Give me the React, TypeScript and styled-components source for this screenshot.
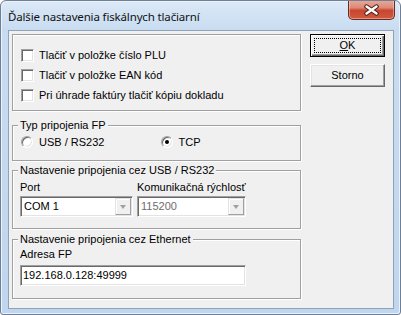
import React from "react";
import styled, { createGlobalStyle } from "styled-components";

const GlobalStyle = createGlobalStyle`
  html, body {
    margin: 0;
    padding: 0;
    background: #ffffff;
  }
  body {
    font-family: "Liberation Sans", Arial, sans-serif;
    font-size: 11px;
    color: #000;
  }
`;

const checkOptions = [
  "Tlačiť v položke číslo PLU",
  "Tlačiť v položke EAN kód",
  "Pri úhrade faktúry tlačiť kópiu dokladu",
];

const App = (): JSX.Element => {
  return (
    <>
      <GlobalStyle />
      <Window>
        <TitleBar>
          <Title>Ďalšie nastavenia fiskálnych tlačiarní</Title>
          <CloseButton>
            <svg width="17" height="12" viewBox="0 0 17 12">
              <path d="M3.5 2.5 L13.5 9.5 M13.5 2.5 L3.5 9.5" stroke="#4a1e16" strokeWidth="4.4" strokeLinecap="round" fill="none" />
              <path d="M3.5 2.5 L13.5 9.5 M13.5 2.5 L3.5 9.5" stroke="#ffffff" strokeWidth="2.4" strokeLinecap="round" fill="none" />
            </svg>
          </CloseButton>
        </TitleBar>
        <Client>
          <LeftColumn>
            <GroupBox $height={77} $pad="10px 0 0 8px">
              {checkOptions.map((text) => (
                <OptionRow key={text}>
                  <CheckBox />
                  <OptionText>{text}</OptionText>
                </OptionRow>
              ))}
            </GroupBox>

            <GroupBox $height={36} $pad="6px 0 0 8px" $gap={14}>
              <GroupLabel>Typ pripojenia FP</GroupLabel>
              <OptionRow>
                <RadioItem>
                  <Radio />
                  <RadioText>USB / RS232</RadioText>
                </RadioItem>
                <RadioItem>
                  <Radio>
                    <RadioDot />
                  </Radio>
                  <RadioText>TCP</RadioText>
                </RadioItem>
              </OptionRow>
            </GroupBox>

            <GroupBox $height={59} $pad="10px 0 0 7px" $gap={9}>
              <GroupLabel>Nastavenie pripojenia cez USB / RS232</GroupLabel>
              <FieldGrid>
                <FieldLabel>Port</FieldLabel>
                <FieldLabel>Komunikačná rýchlosť</FieldLabel>
                <Combo>
                  <ComboText>COM 1</ComboText>
                  <ComboArrow>
                    <ArrowGlyph />
                  </ComboArrow>
                </Combo>
                <Combo>
                  <ComboText $disabled>115200</ComboText>
                  <ComboArrow>
                    <ArrowGlyph />
                  </ComboArrow>
                </Combo>
              </FieldGrid>
            </GroupBox>

            <GroupBox $height={60} $pad="8px 0 0 7px" $gap={10}>
              <GroupLabel>Nastavenie pripojenia cez Ethernet</GroupLabel>
              <FieldLabel>Adresa FP</FieldLabel>
              <Edit>192.168.0.128:49999</Edit>
            </GroupBox>
          </LeftColumn>

          <ButtonColumn>
            <PushButton $isDefault>
              <FocusRect />
              <u>O</u>K
            </PushButton>
            <PushButton>Storno</PushButton>
          </ButtonColumn>
        </Client>
      </Window>
    </>
  );
};

const Window = styled.div`
  box-sizing: border-box;
  width: 401px;
  height: 315px;
  display: flex;
  flex-direction: column;
  border: 1px solid #6e8095;
  border-radius: 6px 6px 3px 3px;
  background: linear-gradient(to bottom, #dce9f7 0px, #c8dcf1 29px, #c0d6ee 100%);
  box-shadow: inset 1px 1px 0 #eaf2fb, inset -1px -1px 0 #eaf2fb;
  overflow: hidden;
`;

const TitleBar = styled.div`
  height: 29px;
  flex-shrink: 0;
  display: flex;
  align-items: center;
  padding-left: 7px;
`;

const Title = styled.span`
  font-family: "Noto Sans", "Open Sans", sans-serif;
  font-size: 11.5px;
  letter-spacing: -0.15px;
  color: #111;
  margin-top: 1px;
`;

const CloseButton = styled.div`
  box-sizing: border-box;
  align-self: flex-start;
  margin: -1px 5px 0 auto;
  width: 47px;
  height: 20px;
  display: flex;
  align-items: center;
  justify-content: center;
  border: 1px solid #6b2a20;
  border-top: none;
  border-radius: 0 0 5px 5px;
  background: linear-gradient(
    to bottom,
    #e9ab9b 0%,
    #dc8a77 40%,
    #c8462f 55%,
    #cf5a40 100%
  );
  box-shadow: inset 0 0 0 1px rgba(255, 220, 210, 0.45);
`;

const Client = styled.div`
  flex: 1;
  display: flex;
  margin: 0 6px 5px 7px;
  padding: 3px 0 0 3px;
  border: 1px solid #8ea2b8;
  background: #f0f0f0;
`;

const LeftColumn = styled.div`
  width: 289px;
  display: flex;
  flex-direction: column;
`;

const GroupBox = styled.div<{ $height: number; $pad: string; $gap?: number }>`
  box-sizing: border-box;
  position: relative;
  height: ${(p) => p.$height}px;
  margin-top: ${(p) => p.$gap ?? 0}px;
  padding: ${(p) => p.$pad};
  border: 1px solid #a0a0a0;
  box-shadow: inset 1px 1px 0 #ffffff, 1px 1px 0 #ffffff;
`;

const GroupLabel = styled.span`
  position: absolute;
  top: -7px;
  left: 5px;
  padding: 0 2px;
  line-height: 13px;
  background: #f0f0f0;
  white-space: nowrap;
`;

const OptionRow = styled.div`
  height: 20px;
  display: flex;
  align-items: center;
`;

const CheckBox = styled.span`
  box-sizing: border-box;
  width: 13px;
  height: 13px;
  flex-shrink: 0;
  background: #ffffff;
  border: 1px solid;
  border-color: #a0a0a0 #ffffff #ffffff #a0a0a0;
  box-shadow: inset 1px 1px 0 #696969, inset -1px -1px 0 #e3e3e3;
`;

const OptionText = styled.span`
  margin-left: 5px;
  line-height: 13px;
  white-space: nowrap;
`;

const RadioItem = styled.div`
  width: 148px;
  display: flex;
  align-items: center;
`;

const Radio = styled.span`
  box-sizing: border-box;
  width: 12px;
  height: 12px;
  flex-shrink: 0;
  display: flex;
  align-items: center;
  justify-content: center;
  border-radius: 50%;
  background: #ffffff;
  border: 1px solid;
  border-color: #a0a0a0 #ffffff #ffffff #a0a0a0;
  box-shadow: inset 1px 1px 0 #696969, inset -1px -1px 0 #e3e3e3;
`;

const RadioDot = styled.span`
  width: 4px;
  height: 4px;
  border-radius: 50%;
  background: #000;
`;

const RadioText = styled.span`
  margin-left: 6px;
  line-height: 13px;
`;

const FieldGrid = styled.div`
  display: grid;
  grid-template-columns: 113px 109px;
  grid-template-rows: 13px 21px;
  column-gap: 4px;
  row-gap: 2px;
`;

const FieldLabel = styled.div`
  line-height: 13px;
  white-space: nowrap;
`;

const Combo = styled.div`
  box-sizing: border-box;
  height: 21px;
  display: flex;
  padding: 1px;
  background: #ffffff;
  border: 1px solid;
  border-color: #a0a0a0 #ffffff #ffffff #a0a0a0;
  box-shadow: inset 1px 1px 0 #696969, inset -1px -1px 0 #e3e3e3;
`;

const ComboText = styled.span<{ $disabled?: boolean }>`
  flex: 1;
  padding-left: 2px;
  line-height: 17px;
  color: ${(p) => (p.$disabled ? "#6d6d6d" : "#000")};
`;

const ComboArrow = styled.span`
  box-sizing: border-box;
  width: 16px;
  display: flex;
  align-items: center;
  justify-content: center;
  background: #f0f0f0;
  border: 1px solid;
  border-color: #e3e3e3 #a0a0a0 #a0a0a0 #e3e3e3;
  box-shadow: inset 1px 1px 0 #ffffff;
`;

const ArrowGlyph = styled.span`
  width: 0;
  height: 0;
  border-left: 3.5px solid transparent;
  border-right: 3.5px solid transparent;
  border-top: 4px solid #a0a0a0;
  margin-top: 1px;
`;

const Edit = styled.div`
  box-sizing: border-box;
  width: 226px;
  height: 21px;
  margin-top: 4px;
  padding: 0 0 0 2px;
  line-height: 19px;
  background: #ffffff;
  border: 1px solid;
  border-color: #a0a0a0 #ffffff #ffffff #a0a0a0;
  box-shadow: inset 1px 1px 0 #696969, inset -1px -1px 0 #e3e3e3;
`;

const ButtonColumn = styled.div`
  display: flex;
  flex-direction: column;
  gap: 7px;
  margin-left: 9px;
`;

const PushButton = styled.div<{ $isDefault?: boolean }>`
  box-sizing: border-box;
  position: relative;
  width: 75px;
  height: 23px;
  display: flex;
  align-items: center;
  justify-content: center;
  background: #f0f0f0;
  border: 1px solid;
  border-color: ${(p) => (p.$isDefault ? "#000" : "#ffffff #696969 #696969 #ffffff")};
  box-shadow: ${(p) =>
    p.$isDefault
      ? "inset 1px 1px 0 #ffffff, inset -1px -1px 0 #696969, inset -2px -2px 0 #a0a0a0"
      : "inset -1px -1px 0 #a0a0a0, inset 1px 1px 0 #e3e3e3"};
  line-height: 13px;

  u {
    text-decoration: underline;
    text-underline-offset: 1px;
  }
`;

const FocusRect = styled.span`
  position: absolute;
  inset: 3px;
  border: 1px dotted #000;
`;

export default App;
